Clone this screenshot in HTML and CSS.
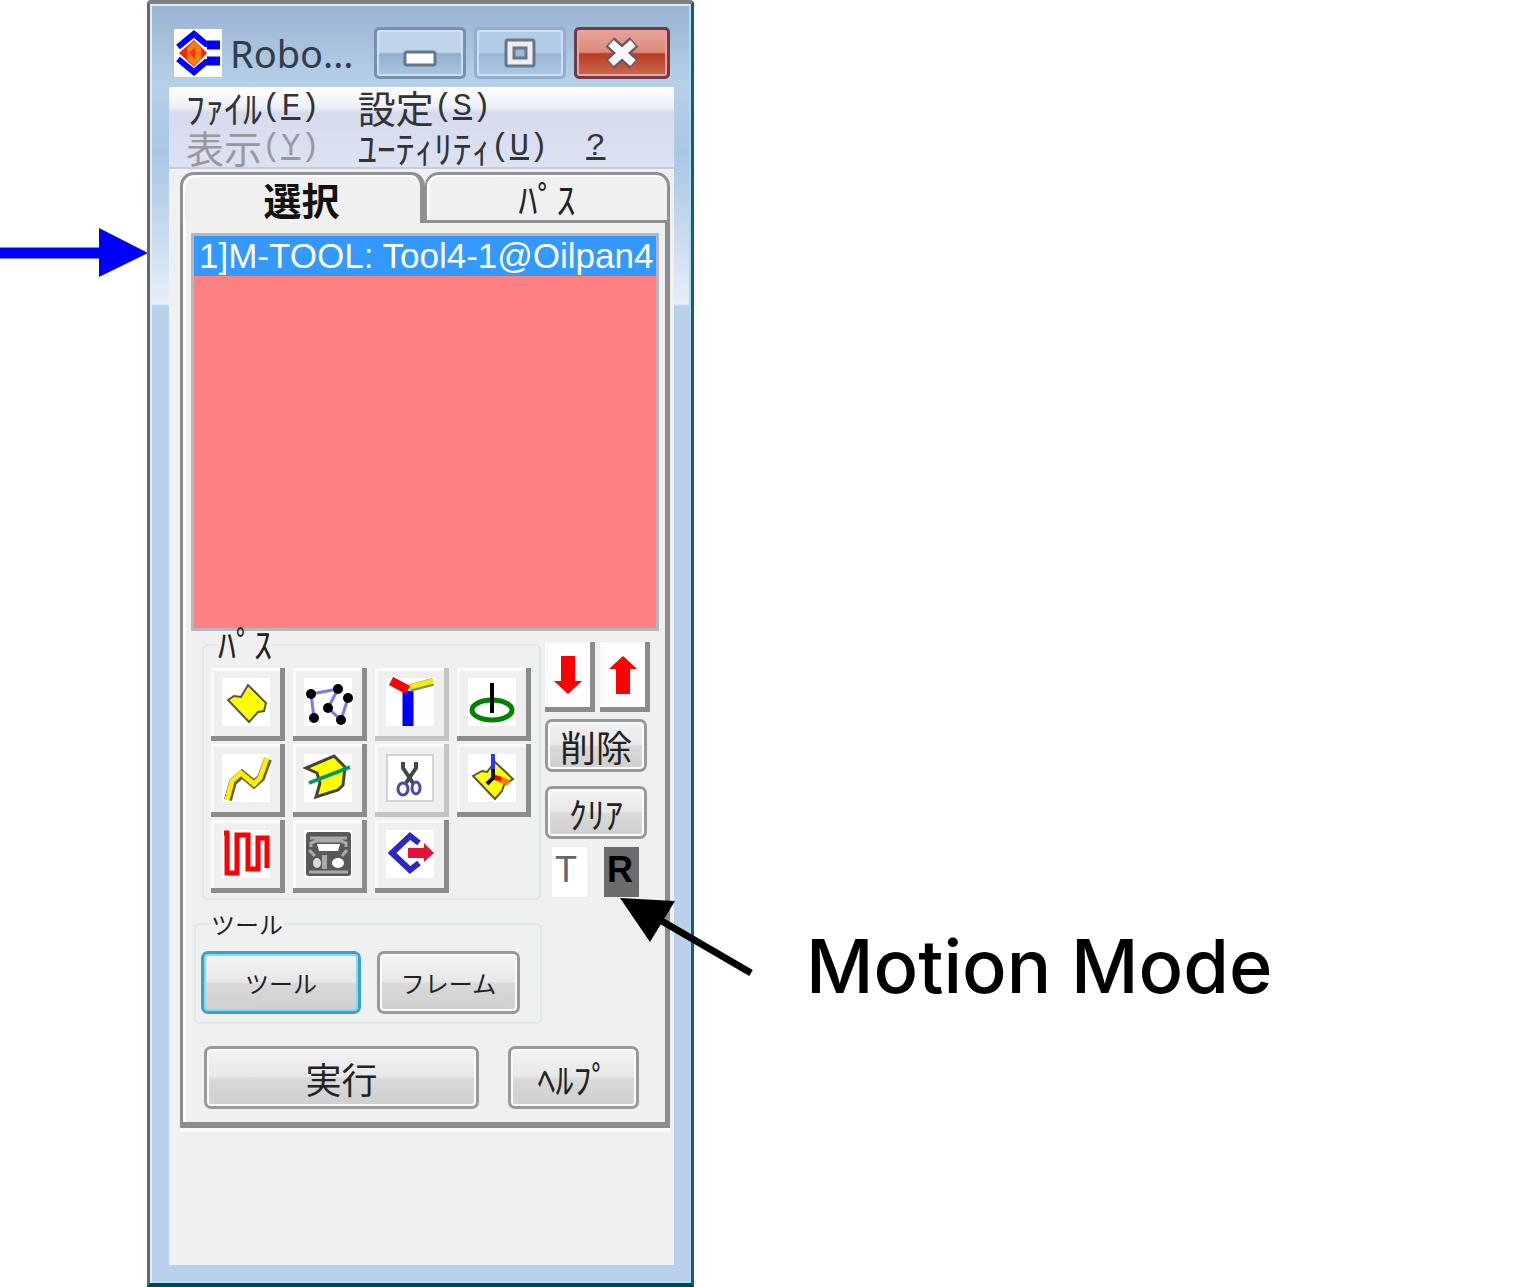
FILE: index.html
```html
<!DOCTYPE html>
<html lang="ja">
<head>
    <meta charset="UTF-8">
    <meta name="viewport" content="width=device-width, initial-scale=1.0">
    <title>Motion Mode</title>
    <link rel="stylesheet" href="styles.css">
</head>
<body>
    <main class="guide">
        <div class="pointer">
            <svg width="148" height="50" viewBox="0 0 148 50" aria-hidden="true">
                <path d="M0 25H104" stroke="#00f" stroke-width="11"/>
                <path d="M99 0L148 25L99 49Z" fill="#00f"/>
            </svg>
        </div>

        <section class="window">
            <header class="titlebar">
                <svg class="logo" viewBox="0 0 48 48" aria-hidden="true">
                    <rect width="48" height="48" fill="#fff"/>
                    <path d="M4 18L20 5L32 15H46M4 30L20 43L32 33H46" fill="none" stroke="#00f" stroke-width="6"/>
                    <path d="M33 16H46M33 32H46" stroke="#00f" stroke-width="9"/>
                    <path d="M5 24L20 11L33 24L20 38Z" fill="#f20"/>
                    <path d="M20 12L27 19V30L20 37L13 30V19Z" fill="#ff7f10"/>
                    <path d="M21 18V30L15 24Z" fill="#f30"/>
                </svg>
                <h1 class="title">Robo...</h1>
                <button class="win-btn" aria-label="最小化">
                    <svg width="34" height="18" viewBox="0 0 34 18"><rect x="2" y="2" width="30" height="13" rx="2" fill="#fff" stroke="#697588" stroke-width="3"/></svg>
                </button>
                <button class="win-btn win-max" aria-label="最大化">
                    <svg width="34" height="34" viewBox="0 0 34 34"><rect x="3" y="4" width="28" height="26" rx="2" fill="#eee" stroke="#697588" stroke-width="3"/><rect x="11" y="12" width="12" height="10" fill="#9db9d6" stroke="#697588" stroke-width="3"/></svg>
                </button>
                <button class="win-btn win-close" aria-label="閉じる">
                    <svg width="36" height="34" viewBox="0 0 36 34"><path d="M6 6L30 28M30 6L6 28" stroke="#6c5960" stroke-width="13"/><path d="M7 7L29 27M29 7L7 27" stroke="#f5f7f8" stroke-width="8"/></svg>
                </button>
            </header>

            <nav class="menu">
                <div class="menu-row">
                    <a href="#">ﾌｧｲﾙ<span class="key">(<u>F</u>)</span></a>
                    <a href="#">設定<span class="key">(<u>S</u>)</span></a>
                </div>
                <div class="menu-row">
                    <a href="#" class="disabled">表示<span class="key">(<u>Y</u>)</span></a>
                    <a href="#">ﾕｰﾃｨﾘﾃｨ<span class="key">(<u>U</u>)</span></a>
                    <a href="#"><span class="key"><u>?</u></span></a>
                </div>
            </nav>

            <div class="client">
                <div class="tabs" role="tablist">
                    <button class="tab active" role="tab" aria-selected="true">選択</button>
                    <button class="tab" role="tab" aria-selected="false">ﾊﾟｽ</button>
                </div>

                <div class="panel">
                    <select class="list" size="8" aria-label="選択">
                        <option selected>1]M-TOOL: Tool4-1@Oilpan4</option>
                    </select>

                    <div class="controls">
                        <div class="groups">
                            <fieldset class="group path-group">
                                <legend>ﾊﾟｽ</legend>
                                <div class="icons">
                                    <button class="icon" aria-label="面">
                                        <svg viewBox="0 0 48 48"><rect width="48" height="48" fill="#fff"/><path d="M6 22L12 18L19 19L26 7L44 25L42 33L36 34L27 44Z" fill="#ff0" stroke="#554" stroke-width="2"/></svg>
                                    </button>
                                    <button class="icon" aria-label="点列">
                                        <svg viewBox="0 0 48 48"><rect width="48" height="48" fill="#fff"/><path d="M10 40L7 16L34 11L24 30L37 42L44 20" fill="none" stroke="#77f" stroke-width="3"/><g><circle cx="7" cy="16" r="5"/><circle cx="34" cy="11" r="5"/><circle cx="44" cy="20" r="5"/><circle cx="24" cy="30" r="5"/><circle cx="10" cy="40" r="5"/><circle cx="37" cy="42" r="5"/></g></svg>
                                    </button>
                                    <button class="icon flat" aria-label="座標">
                                        <svg viewBox="0 0 48 48"><rect width="48" height="48" fill="#fff"/><path d="M22 13V48" stroke="#00f" stroke-width="11"/><path d="M24 10L47 4" stroke="#887" stroke-width="8"/><path d="M24 9L47 3" stroke="#f5ee00" stroke-width="5"/><path d="M5 3L22 12" stroke="#f00" stroke-width="9"/></svg>
                                    </button>
                                    <button class="icon" aria-label="円">
                                        <svg viewBox="0 0 48 48"><rect width="48" height="48" fill="#fff"/><ellipse cx="24" cy="32" rx="20" ry="10" fill="none" stroke="#008400" stroke-width="5"/><path d="M24 5V35" stroke="#000" stroke-width="4"/></svg>
                                    </button>
                                    <button class="icon" aria-label="曲線">
                                        <svg viewBox="0 0 48 48"><rect width="48" height="48" fill="#fff"/><path d="M6 46L11 28L20 20L32 30L39 24L46 5" fill="none" stroke="#665e40" stroke-width="8"/><path d="M5 46L10 27L19 19L32 30L38 24L45 4" fill="none" stroke="#fe0" stroke-width="5"/></svg>
                                    </button>
                                    <button class="icon" aria-label="断面">
                                        <svg viewBox="0 0 48 48"><rect width="48" height="48" fill="#fff"/><path d="M2 14L30 2L41 13L39 31L34 36L12 43L16 29L13 19Z" fill="#ff0" stroke="#443" stroke-width="3"/><path d="M5 29L46 13" stroke="#00966e" stroke-width="4"/></svg>
                                    </button>
                                    <button class="icon flat" aria-label="切り取り">
                                        <svg viewBox="0 0 48 48"><rect x="1" y="1" width="46" height="46" fill="#fff" stroke="#d4d2d8" stroke-width="2"/><path d="M17 8V14L27 29M30 8V14L20 29" fill="none" stroke="#444" stroke-width="4"/><ellipse cx="17" cy="35" rx="5" ry="6" fill="none" stroke="#4a4aaa" stroke-width="3"/><ellipse cx="30" cy="34" rx="4" ry="6" fill="none" stroke="#4a4aaa" stroke-width="3"/></svg>
                                    </button>
                                    <button class="icon" aria-label="法線">
                                        <svg viewBox="0 0 48 48"><rect width="48" height="48" fill="#fff"/><path d="M5 22L14 17L19 18L27 8L45 25L36 31L34 37L27 45Z" fill="#ff0" stroke="#554" stroke-width="2"/><path d="M26 23L41 29" stroke="#f70" stroke-width="6"/><path d="M25 23L33 25" stroke="#e00" stroke-width="4"/><path d="M25 12V24L19 30" fill="none" stroke="#111" stroke-width="4"/><path d="M25 0V15" stroke="#33e" stroke-width="4"/></svg>
                                    </button>
                                    <button class="icon" aria-label="ジグザグ">
                                        <svg viewBox="0 0 48 48"><rect width="48" height="48" fill="#fff"/><path d="M2 3H5V43H15V5H26V39H36V8H45V38" fill="none" stroke="#f00" stroke-width="5"/></svg>
                                    </button>
                                    <button class="icon" aria-label="コントローラ">
                                        <svg viewBox="0 0 48 48"><rect width="48" height="48" fill="#fff"/><rect x="2" y="2" width="45" height="44" rx="3" fill="#595959"/><path d="M6 8H43M7 17V13L12 11H37L42 13V17" fill="none" stroke="#aaa" stroke-width="3"/><path d="M13 14H36L34 21H15Z" fill="#fff"/><path d="M5 20L11 26M43 20L38 26M5 42H44" stroke="#aaa" stroke-width="3"/><ellipse cx="13" cy="33" rx="4" ry="5" fill="#ddd"/><rect x="18" y="25" width="5" height="14" fill="#aaa"/><ellipse cx="34" cy="33" rx="6" ry="5" fill="#fff"/></svg>
                                    </button>
                                    <button class="icon" aria-label="出力">
                                        <svg viewBox="0 0 48 48"><rect width="48" height="48" fill="#fff"/><path d="M33 13L24 6L6 23L24 40L33 33" fill="none" stroke="#2a2ac0" stroke-width="6"/><path d="M22 18H38V13L48 23L38 32V28H22Z" fill="#e2143c"/></svg>
                                    </button>
                                </div>
                            </fieldset>

                            <fieldset class="group tool-group">
                                <legend>ツール</legend>
                                <div class="tools">
                                    <button class="btn kana default">ツール</button>
                                    <button class="btn kana">フレーム</button>
                                </div>
                            </fieldset>
                        </div>

                        <div class="side">
                            <div class="moves">
                                <button class="icon move" aria-label="下へ">
                                    <svg viewBox="0 0 28 38"><path d="M7 0H21V25H28L14 38L0 25H7Z" fill="#f00"/></svg>
                                </button>
                                <button class="icon move" aria-label="上へ">
                                    <svg viewBox="0 0 28 38"><path d="M7 38H21V13H28L14 0L0 13H7Z" fill="#f00"/></svg>
                                </button>
                            </div>
                            <button class="btn small">削除</button>
                            <button class="btn small">ｸﾘｱ</button>
                            <div class="modes">
                                <button class="mode" aria-pressed="false">T</button>
                                <button class="mode on" aria-pressed="true">R</button>
                            </div>
                        </div>
                    </div>

                    <div class="actions">
                        <button class="btn run">実行</button>
                        <button class="btn help">ﾍﾙﾌﾟ</button>
                    </div>
                </div>
            </div>
        </section>

        <aside class="callout">
            <svg class="callout-arrow" width="134" height="80" viewBox="0 0 134 80" aria-hidden="true">
                <path d="M40 23L131 76" stroke="#000" stroke-width="7"/>
                <path d="M0 1L55 4L30 45Z"/>
            </svg>
            <p class="callout-text">Motion Mode</p>
        </aside>
    </main>
</body>
</html>
```

FILE: styles.css
```css
* {
    box-sizing: border-box;
}

body {
    margin: 0;
    background: #fff;
    color: #222;
    font-family: "Noto Sans CJK JP", sans-serif;
    font-size: 38px;
    line-height: 40px;
}

button {
    margin: 0;
    padding: 0;
    font: inherit;
    color: inherit;
}

svg {
    display: block;
    overflow: visible;
}

.guide {
    display: grid;
    grid-template-columns: 147px minmax(0, 547px) 1fr;
    min-height: 100vh;
}

.pointer {
    padding-top: 228px;
}

/* Window frame */
.window {
    display: flex;
    flex-direction: column;
    padding: 0 17px 18px 19px;
    border: 3px solid #666;
    border-top: 4px solid #7f7f7f;
    border-right-color: #235a66;
    border-bottom: 4px solid #00454f;
    border-radius: 4px 4px 0 0;
    box-shadow: inset 2px 2px #dcebf8, inset -2px -2px #a5def8;
    background: linear-gradient(#98b2d0, #b7d0ea 80px, #a9c6e4 150px, #e6eef8 300px, #b9d1ea 302px);
}

.titlebar {
    display: flex;
    align-items: center;
    gap: 8px;
    height: 83px;
    padding: 15px 4px 0 5px;
}

.logo {
    width: 48px;
    height: 48px;
}

.title {
    flex: 1;
    margin: 0;
    font: 400 38px/44px "Noto Sans", sans-serif;
    color: #333c48;
}

.win-btn {
    display: flex;
    justify-content: center;
    align-items: center;
    width: 92px;
    height: 52px;
    border: 3px solid #7890ad;
    border-radius: 5px;
    box-shadow: inset 0 0 0 2px #cddff0;
    background: linear-gradient(#c0d5ea 48%, #92b0cf 52%, #a9c6e2);
}

.win-btn:first-of-type {
    padding-top: 12px;
}

.win-max {
    border-color: #93add0;
    background: linear-gradient(#b4cde6 48%, #9bb9d7 52%, #abc8e5);
}

.win-close {
    width: 96px;
    border-color: #6f3a4a;
    box-shadow: inset 0 0 0 2px #e5a79c;
    background: linear-gradient(#e6a497, #de8a7c 48%, #b93c23 52%, #cd6a50);
}

/* Menu */
.menu {
    height: 82px;
    padding: 0 17px;
    border-bottom: 2px solid #c9ccd6;
    background: linear-gradient(#fff, #eef0f8 20px, #d5daed 26px, #dde2f3);
}

.menu-row {
    display: flex;
    gap: 38px;
    height: 40px;
}

.menu a {
    display: flex;
    align-items: center;
    color: #333;
    text-decoration: none;
    white-space: nowrap;
}

.menu .disabled {
    color: #999;
}

.key {
    font: 32px/36px "Liberation Mono", monospace;
}

/* Tabs */
.client {
    flex: 1;
    padding: 3px 4px 0 11px;
    background: #f0f0f0;
}

.tabs {
    display: grid;
    grid-template-columns: 1fr 1fr;
}

.tab {
    height: 51px;
    border: 3px solid #909090;
    border-left-width: 2px;
    border-radius: 14px 14px 0 0;
    background: #f0f0f0;
    box-shadow: inset 2px 2px #fff;
}

.tab.active {
    border-left-width: 3px;
    border-right-width: 5px;
    border-bottom: 0;
    font-weight: 700;
    color: #111;
}

.panel {
    padding: 10px 6px 13px 8px;
    border: solid #8c8c8c;
    border-width: 0 5px 6px 3px;
    box-shadow: inset 3px 0 #fff, 0 4px #fafafa;
}

/* Path list */
.list {
    display: block;
    width: 100%;
    height: 398px;
    padding: 0;
    border: 3px solid #b4b8bd;
    border-radius: 0;
    outline: 0;
    overflow: hidden;
    background: #ff8080;
    font: 35px/38px "Liberation Sans", sans-serif;
}

.list option {
    min-height: 38px;
    padding: 0 5px;
    color: #fff;
}

.list option:checked {
    background: #3399ff linear-gradient(#3399ff, #3399ff);
    color: #fff;
}

/* Controls below the list */
.controls {
    display: grid;
    grid-template-columns: 1fr 114px;
}

.group {
    min-width: 0;
    border: 2px solid #dde7ec;
    border-radius: 6px;
}

.group legend {
    padding: 0;
    line-height: 28px;
}

.path-group {
    margin: 0 4px 0 11px;
    padding: 9px 7px 5px;
}

.path-group legend {
    margin-left: 7px;
    font-size: 36px;
    line-height: 24px;
    padding-bottom: 4px;
}

.tool-group {
    margin: 10px 3px 0;
    padding: 13px 5px 8px;
}

.tool-group legend {
    margin-left: 10px;
    font-size: 24px;
}

.icons {
    display: grid;
    grid-template-columns: repeat(4, 74px);
    gap: 3px 8px;
}

.icon {
    display: flex;
    justify-content: center;
    align-items: center;
    height: 73px;
    border: solid #8c8c8c;
    border-width: 0 5px 5px 0;
    box-shadow: inset 3px 3px #fafafa;
    background: #efefef;
}

.icon svg {
    width: 48px;
    height: 48px;
}

.icon.flat {
    border-color: #c4c4c4;
}

.tools {
    display: flex;
    gap: 16px;
}

.btn {
    height: 63px;
    border: 3px solid #999;
    border-radius: 7px;
    box-shadow: inset 0 0 0 2px #fafafa;
    background: linear-gradient(#f3f3f3, #e8e8e8 48%, #d9d9d9 52%, #cfcfcf);
    font-size: 36px;
}

.btn.kana {
    width: 143px;
    font-size: 24px;
}

.btn.default {
    width: 160px;
    border-color: #3e9fca;
    box-shadow: inset 0 0 0 2px #7ddcf8;
}

.side {
    padding-top: 11px;
}

.moves {
    display: flex;
    gap: 5px;
    margin-bottom: 7px;
}

.move {
    width: 50px;
    height: 70px;
    background: #fdfdfd;
}

.move svg {
    width: 28px;
    height: 38px;
}

.btn.small {
    display: block;
    width: 102px;
    height: 53px;
    margin-bottom: 14px;
}

.modes {
    display: flex;
    gap: 17px;
    padding-left: 7px;
    margin-top: -6px;
}

.mode {
    width: 35px;
    height: 50px;
    padding: 0 0 4px 3px;
    border: 0;
    background: #fff;
    color: #666;
    font: 36px/46px "Liberation Sans", sans-serif;
    text-align: left;
}

.mode.on {
    background: #6b6b6b;
    color: #000;
    font-weight: 700;
}

.actions {
    display: flex;
    gap: 29px;
    padding: 22px 20px 0 13px;
}

.run {
    flex: 1;
}

.help {
    width: 131px;
}

/* Callout */
.callout {
    position: relative;
    padding: 922px 0 0 112px;
}

.callout-arrow {
    position: absolute;
    left: -74px;
    top: 897px;
}

.callout-text {
    margin: 0;
    color: #000;
    font: 500 74px/88px Inter, "Noto Sans CJK JP", sans-serif;
    white-space: nowrap;
}
```
